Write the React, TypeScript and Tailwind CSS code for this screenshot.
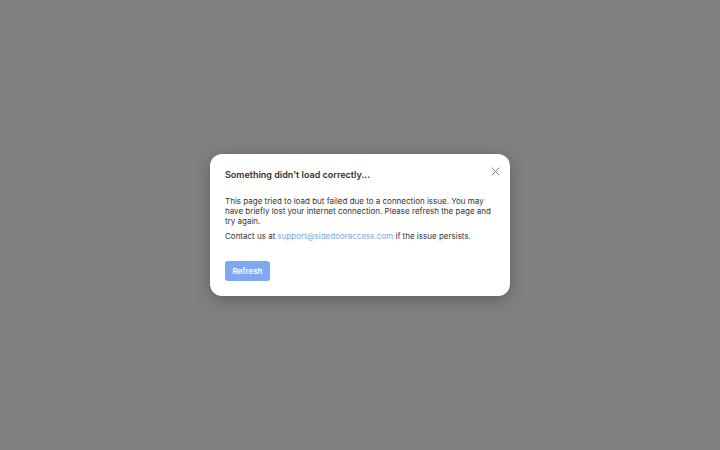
import React from "react";

export default function App() {
  return (
    <div className="w-[720px] h-[450px] bg-[#808080] flex items-center justify-center" style={{ fontFamily: "Inter, 'Noto Sans', sans-serif" }}>
      <div className="relative w-[300px] h-[142px] bg-white rounded-[12px] shadow-[0_4px_16px_rgba(0,0,0,0.25)] px-[15px] pt-[15px]">
        <button className="absolute right-[10px] top-[12px] w-[10px] h-[10px] flex items-center justify-center text-[#7a7a7a]">
          <svg width="9" height="9" viewBox="0 0 10 10" fill="none" stroke="currentColor" strokeWidth="1" strokeLinecap="round">
            <path d="M1 1L9 9M9 1L1 9" />
          </svg>
        </button>
        <div className="text-[9px] leading-[12px] font-semibold text-[#333333]">Something didn't load correctly...</div>
        <p className="mt-[15px] text-[8px] leading-[10px] text-[#333333]">
          This page tried to load but failed due to a connection issue. You may have briefly lost your internet connection. Please refresh the page and try again.
        </p>
        <p className="mt-[5px] text-[8px] leading-[10px] text-[#333333]">
          Contact us at <span className="text-[#7ea5df]">support@sidedooraccess.com</span> if the issue persists.
        </p>
        <button className="mt-[20px] w-[45px] h-[20px] rounded-[3px] bg-[#7ea9f2] text-white text-[8px] font-semibold flex items-center justify-center">
          Refresh
        </button>
      </div>
    </div>
  );
}
